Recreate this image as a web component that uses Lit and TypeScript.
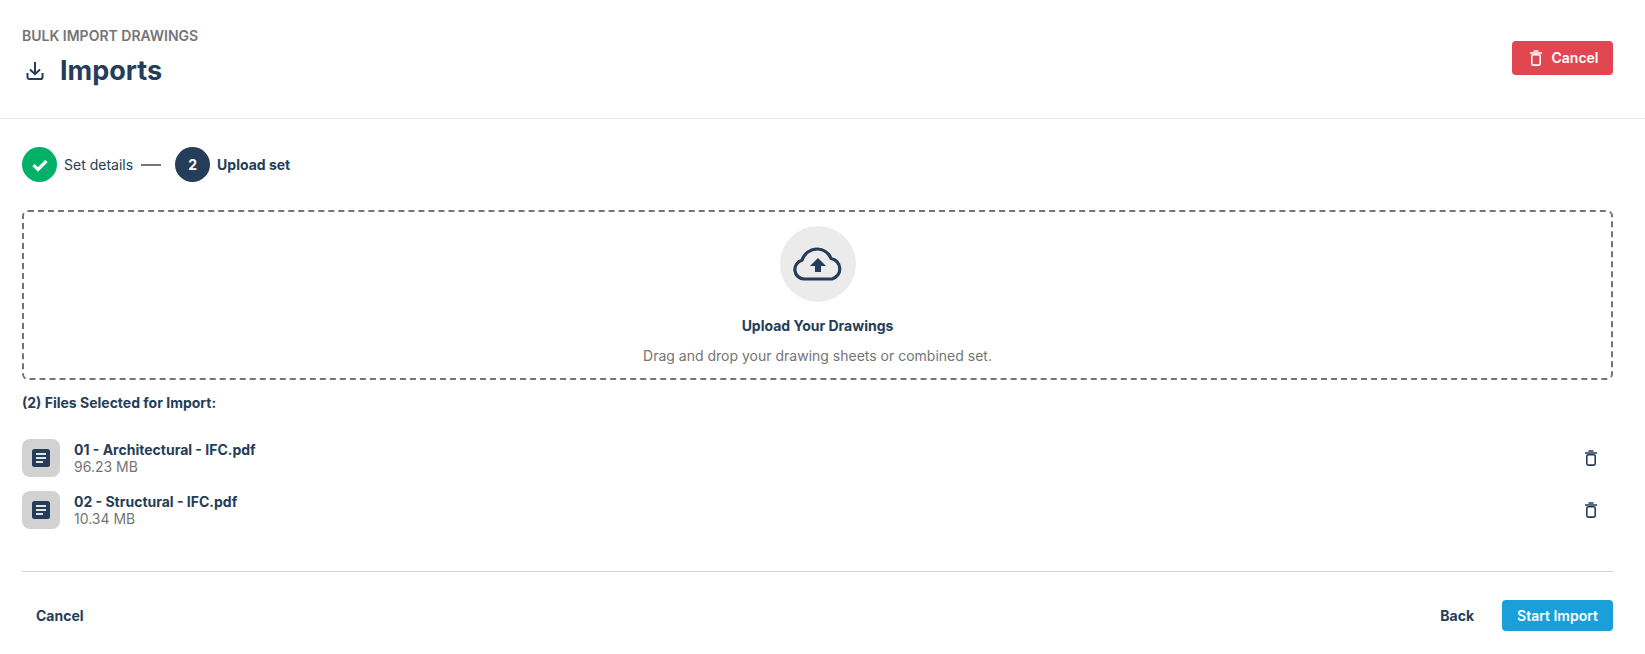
import { LitElement, html, css, svg } from "lit";
import { customElement } from "lit/decorators.js";

const trash = svg`<path d="M3.500 1h5M0 3h12" fill="none" stroke="currentColor" stroke-width="1.500"/><rect x="1.800" y="4.800" width="8.400" height="10.300" rx="1.300" fill="none" stroke="currentColor" stroke-width="1.600"/>`;

@customElement("app-root")
export class AppRoot extends LitElement {
  static styles = css`
    :host { display: block; font-family: Inter, "Liberation Sans", sans-serif; color: #253d58; background: #fff; height: 654px; overflow: hidden; }
    .header { height: 119px; box-sizing: border-box; border-bottom: 1px solid #e8e8e8; padding: 0 32px 0 22px; display: flex; justify-content: space-between; align-items: center; }
    .head-left { display: flex; flex-direction: column; margin-top: -2px; }
    .eyebrow { font-size: 14px; line-height: 17px; font-weight: 600; color: #757575; }
    .title-row { display: flex; align-items: center; margin-top: 9px; height: 36px; }
    .title-row svg { width: 24px; height: 24px; margin-left: 1px; margin-right: 13px; }
    h1 { margin: 0; font-size: 27px; line-height: 36px; font-weight: 700; }
    .btn { display: inline-flex; align-items: center; justify-content: center; border: 0; border-radius: 4px; font: 600 14px/20px Inter, sans-serif; box-sizing: border-box; }
    .danger { width: 101px; height: 34px; background: #e24651; color: #fff; gap: 9px; margin-top: -3px; padding: 0 0 0 4px; }
    .danger svg { width: 12px; height: 16px; }
    .body { padding: 0 32px 0 22px; }
    .stepper { display: flex; align-items: center; height: 35px; margin-top: 28px; font-size: 14px; }
    .circle { width: 35px; height: 35px; border-radius: 50%; display: flex; align-items: center; justify-content: center; color: #fff; font-weight: 700; }
    .done { background: #00b167; }
    .cur { background: #253d58; }
    .label { margin-left: 7px; }
    .label.b { font-weight: 700; }
    .dash { width: 20px; height: 2px; background: #757575; margin: 0 14px 0 8px; }
    .drop { margin-top: 28px; height: 170px; box-sizing: border-box; border: 2px dashed #757575; border-radius: 6px; display: flex; flex-direction: column; align-items: center; padding-top: 14px; }
    .bubble { width: 76px; height: 76px; border-radius: 50%; background: #ebebeb; display: flex; align-items: center; justify-content: center; }
    .drop h2 { margin: 14px 0 0; font-size: 14px; line-height: 20px; font-weight: 700; }
    .drop p { margin: 10px 0 0; font-size: 14px; line-height: 20px; color: #757575; }
    .count { margin-top: 13px; font-size: 14px; line-height: 20px; font-weight: 700; }
    .files { margin-top: 26px; display: flex; flex-direction: column; gap: 14px; }
    .file { display: flex; align-items: center; height: 38px; }
    .ficon { width: 38px; height: 38px; border-radius: 8px; background: #d2d2d2; display: flex; align-items: center; justify-content: center; margin-right: 14px; }
    .meta { flex: 1; }
    .name { font-size: 14px; line-height: 17px; font-weight: 700; }
    .size { font-size: 14px; line-height: 17px; color: #757575; }
    .del { width: 12px; height: 16px; margin-right: 16px; }
    .rule { height: 1px; background: #d2d2d2; margin-top: 42px; }
    .foot { display: flex; align-items: center; justify-content: space-between; margin-top: 28px; height: 31px; }
    .ghost { background: none; padding: 0; color: #253d58; font-weight: 700; }
    .left-c { margin-left: 14px; }
    .right { display: flex; align-items: center; gap: 28px; }
    .primary { width: 111px; height: 31px; background: #1b9fdb; color: #fff; }
  `;

  private file(name: string, size: string) {
    return html`<div class="file">
      <div class="ficon"><svg width="18" height="18" viewBox="0 0 18 18"><rect width="18" height="18" rx="2.500" fill="#253d58"/><path d="M4 5h10M4 9h10M4 13h7" stroke="#e4e4e4" stroke-width="1.800" fill="none"/></svg></div>
      <div class="meta"><div class="name">${name}</div><div class="size">${size}</div></div>
      <svg class="del" viewBox="0 0 12 16">${trash}</svg>
    </div>`;
  }

  render() {
    return html`
      <div class="header">
        <div class="head-left">
          <div class="eyebrow">BULK IMPORT DRAWINGS</div>
          <div class="title-row">
            <svg viewBox="0 0 24 24" fill="none" stroke="currentColor" stroke-width="2"><path d="M12 3v12M7 10.500l5 4.700 5-4.700"/><path d="M4.500 14v4.200A1.800 1.800 0 0 0 6.300 20h11.400a1.800 1.800 0 0 0 1.800-1.800V14"/></svg>
            <h1>Imports</h1>
          </div>
        </div>
        <button class="btn danger"><svg viewBox="0 0 12 16">${trash}</svg>Cancel</button>
      </div>
      <div class="body">
        <div class="stepper">
          <div class="circle done"><svg width="18" height="18" viewBox="0 0 18 18"><path d="M2.500 9.200 7 13.500l8.500-8.500" fill="none" stroke="#fff" stroke-width="3.200"/></svg></div>
          <span class="label">Set details</span>
          <span class="dash"></span>
          <div class="circle cur">2</div>
          <span class="label b">Upload set</span>
        </div>
        <div class="drop">
          <div class="bubble"><svg width="50" height="34" viewBox="0 0 50 34"><path d="M11 32a9.500 9.500 0 0 1-2-18.700A16 16 0 0 1 24.500 2 15.500 15.500 0 0 1 38 11.500 10.500 10.500 0 0 1 39 32Z" fill="none" stroke="#253d58" stroke-width="3.200" stroke-linejoin="round"/><path d="M25 11l8 8h-5v6h-6v-6h-5Z" fill="#253d58"/></svg></div>
          <h2>Upload Your Drawings</h2>
          <p>Drag and drop your drawing sheets or combined set.</p>
        </div>
        <div class="count">(2) Files Selected for Import:</div>
        <div class="files">
          ${this.file("01 - Architectural - IFC.pdf", "96.23 MB")}
          ${this.file("02 - Structural - IFC.pdf", "10.34 MB")}
        </div>
        <div class="rule"></div>
        <div class="foot">
          <button class="btn ghost left-c">Cancel</button>
          <div class="right"><button class="btn ghost">Back</button><button class="btn primary">Start Import</button></div>
        </div>
      </div>
    `;
  }
}
